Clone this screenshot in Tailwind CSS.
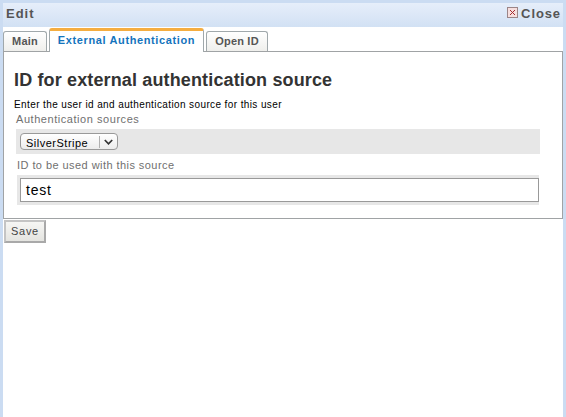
<!DOCTYPE html>
<html lang="en">
<head>
<meta charset="utf-8">
<title>Edit</title>
<script src="https://cdn.jsdelivr.net/npm/@tailwindcss/browser@4"></script>
</head>
<body class="h-[417px] w-[566px] overflow-hidden bg-[#cbdcf2] px-[3px] pt-[3px] font-['Liberation_Sans',Arial,sans-serif] whitespace-nowrap">
<div class="flex h-full flex-col bg-white">
  <header class="flex h-6 shrink-0 items-center justify-between bg-linear-to-b from-[#e6eefa] to-[#d2e1f4] pr-[2px] pl-[3px] text-[13px] leading-[22px] font-bold text-[#555]">
    <h1 class="pb-[2px] tracking-[1px]">Edit</h1>
    <button class="flex items-center gap-[3px] pb-[2px]">
      <svg class="mb-[3px]" width="11" height="11" viewBox="0 0 11 11" shape-rendering="crispEdges"><rect x=".5" y=".5" width="10" height="10" fill="#f6dede" stroke="#9b8587"/><path d="M3 3h1v1h1v1h1V4h1V3h1v1H7v1H6v1h1v1h1v1H7V7H6V6H5v1H4v1H3V7h1V6h1V5H4V4H3z" fill="#a52d32"/></svg>
      <span class="tracking-[0.9px]">Close</span>
    </button>
  </header>
  <nav class="relative z-10 flex h-[25px] shrink-0 items-end gap-[2px] pt-px text-[11px] font-bold text-[#555]">
    <div class="mb-px flex h-5 w-11 justify-center rounded-t-[3px] border border-b-0 border-[#a0a8ab] bg-linear-to-b from-white to-[#efefec] leading-[19px] tracking-[0.2px]">Main</div>
    <div class="flex h-6 w-[155px] justify-center rounded-t-[3px] border border-b-0 border-t-3 border-[#a0a8ab] border-t-[#f5ad40] bg-white leading-[19px] tracking-[0.62px] text-[#1474bd]">External Authentication</div>
    <div class="mb-px flex h-5 w-[62px] justify-center rounded-t-[3px] border border-b-0 border-[#a0a8ab] bg-linear-to-b from-white to-[#efefec] leading-[19px] tracking-[0.2px]">Open ID</div>
  </nav>
  <main class="-mt-px h-[168px] shrink-0 border border-[#a0a3a5] pl-[10px]">
    <h2 class="mt-[16px] h-[24px] text-[18px] leading-[24px] font-bold tracking-[0.14px] text-[#333]">ID for external authentication source</h2>
    <p class="mt-[7px] h-3 text-[10px] leading-3 tracking-[0.39px] text-black">Enter the user id and authentication source for this user</p>
    <label class="ml-[2px] mt-px block h-[15px] text-[11px] leading-[14px] tracking-[0.55px] text-[#707070]">Authentication sources</label>
    <div class="ml-[2px] mt-[2px] flex h-[25px] w-[524px] items-center bg-[#e7e7e7] pl-1">
      <div class="flex h-[17px] w-[98px] items-center rounded-[4px] border border-[#999] bg-linear-to-b from-white to-[#ececec] pl-[5px] text-[11px] text-black">
        <span class="w-[73px] pt-[3px] leading-[14px] tracking-[0.5px]">SilverStripe</span>
        <span class="h-3 w-px bg-[#b0b0b0]"></span>
        <svg class="ml-1" width="9" height="6" viewBox="0 0 9 6" fill="none" stroke="#333" stroke-width="1.7"><path d="M.8 1l3.7 3.8L8.2 1"/></svg>
      </div>
    </div>
    <label class="ml-[3px] mt-[4px] block h-[14px] text-[11px] leading-[14px] tracking-[0.44px] text-[#707070]">ID to be used with this source</label>
    <div class="ml-[3px] mt-[3px] h-[30px] w-[522px] bg-[#e7e7e7] pt-[3px] pl-[3px]">
      <div class="h-6 w-[519px] border border-[#999] bg-white pl-[5px] text-[14px] leading-[23px] tracking-[0.8px] text-black">test</div>
    </div>
  </main>
  <button class="mt-px ml-px flex h-[23px] w-[42px] shrink-0 justify-center border-2 border-[#a9a9a9] border-t-[#c4c4c4] border-l-[#c4c4c4] bg-linear-to-b from-[#f6f6f4] to-[#e4e4e0] text-[11px] leading-[19px] tracking-[0.7px] text-[#444]">Save</button>
</div>
</body>
</html>
